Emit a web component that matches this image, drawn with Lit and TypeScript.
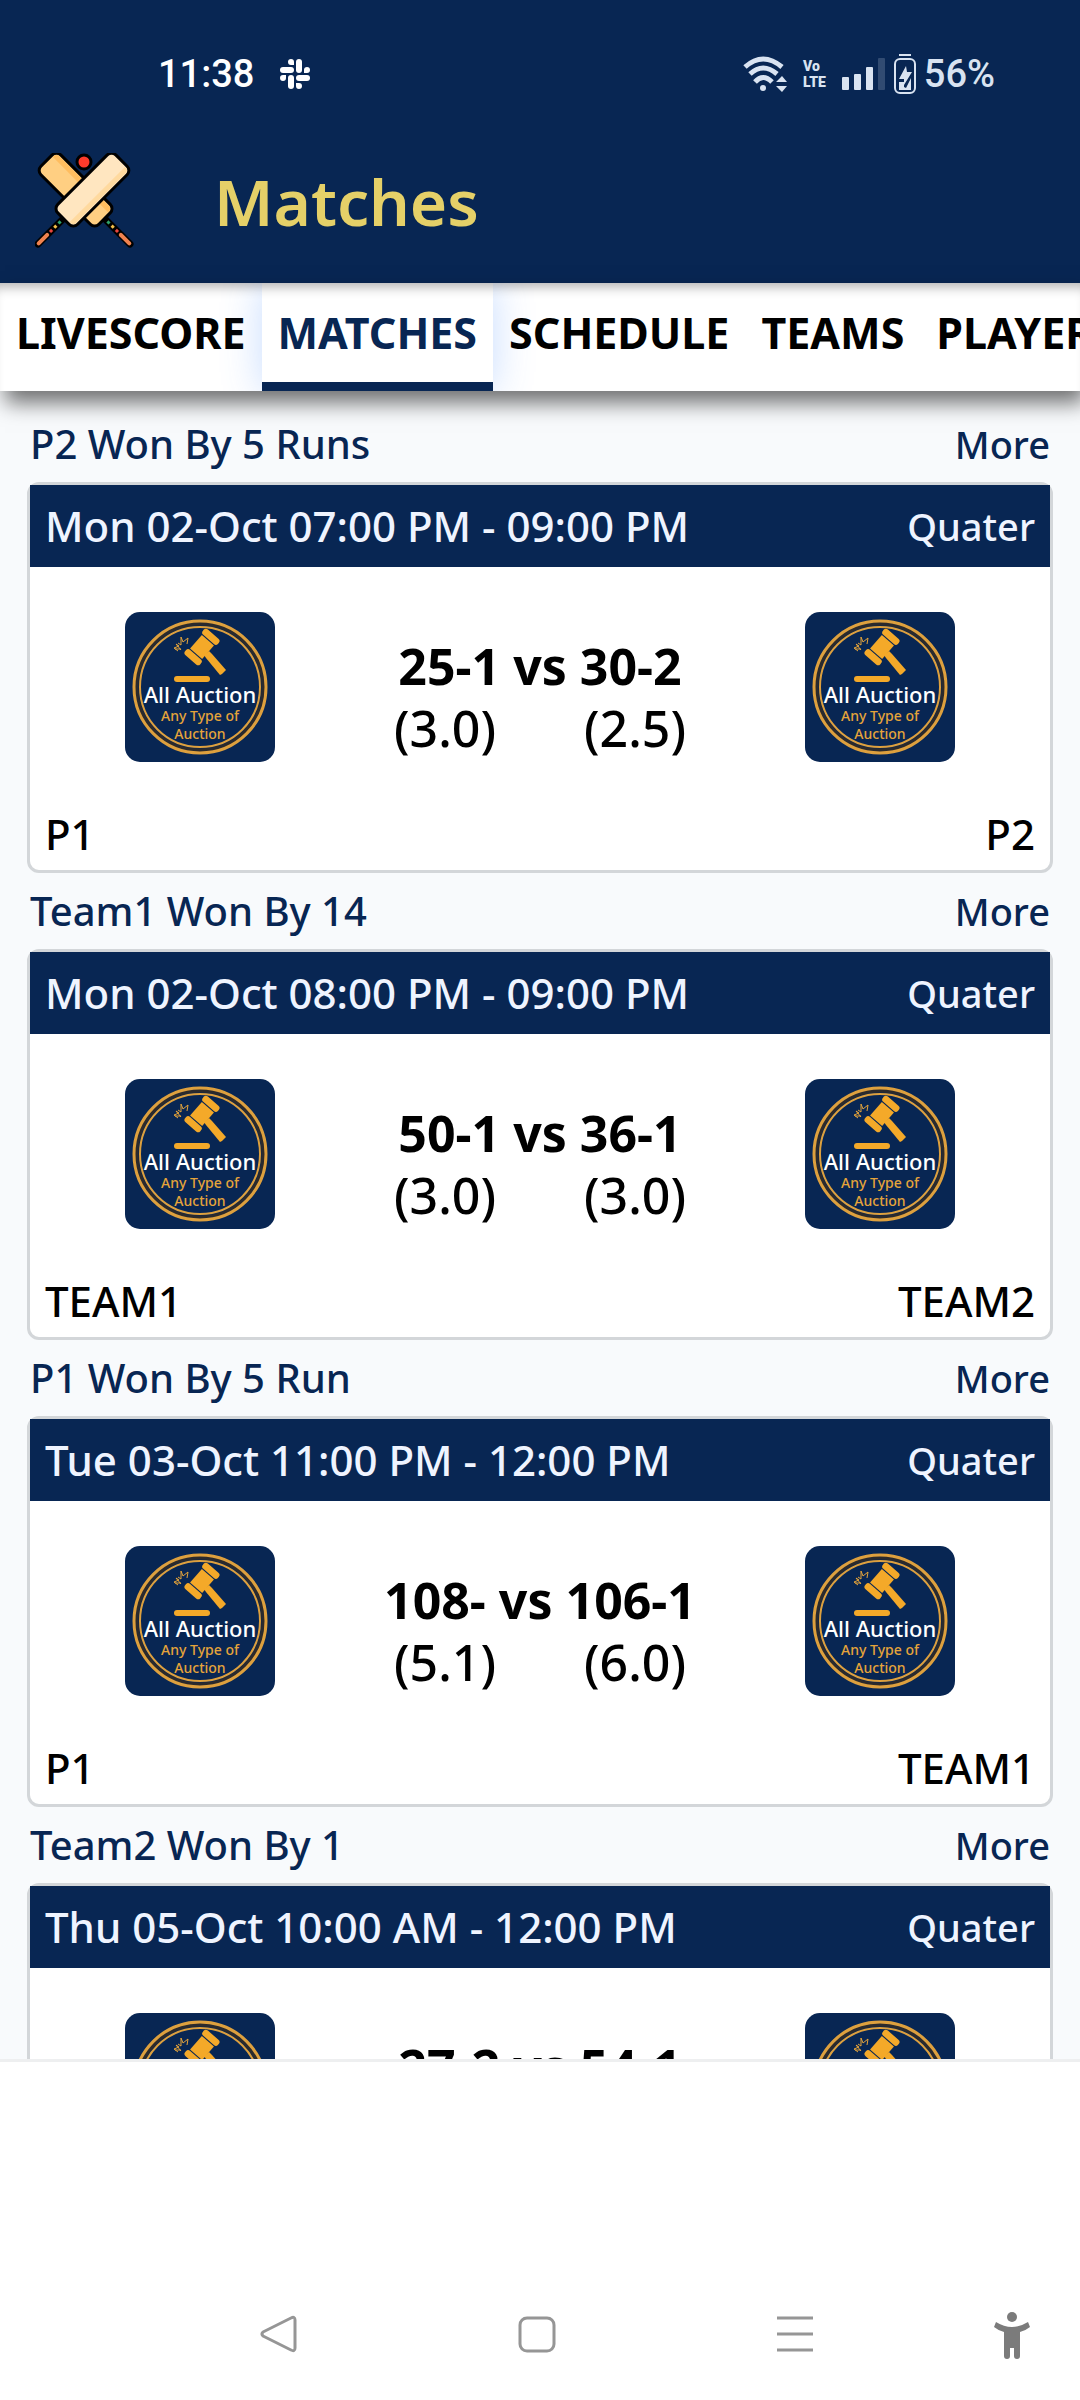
import { LitElement, html, css, svg } from 'lit';
import { customElement, property, state } from 'lit/decorators.js';
import { classMap } from 'lit/directives/class-map.js';

interface Side {
  name: string;
  score: string;
  overs: string;
}

interface Match {
  result: string;
  time: string;
  stage: string;
  home: Side;
  away: Side;
}

const MATCHES: Match[] = [
  {
    result: 'P2 Won By 5 Runs',
    time: 'Mon 02-Oct 07:00 PM - 09:00 PM',
    stage: 'Quater',
    home: { name: 'P1', score: '25-1', overs: '3.0' },
    away: { name: 'P2', score: '30-2', overs: '2.5' },
  },
  {
    result: 'Team1 Won By 14',
    time: 'Mon 02-Oct 08:00 PM - 09:00 PM',
    stage: 'Quater',
    home: { name: 'TEAM1', score: '50-1', overs: '3.0' },
    away: { name: 'TEAM2', score: '36-1', overs: '3.0' },
  },
  {
    result: 'P1 Won By 5 Run',
    time: 'Tue 03-Oct 11:00 PM - 12:00 PM',
    stage: 'Quater',
    home: { name: 'P1', score: '108-', overs: '5.1' },
    away: { name: 'TEAM1', score: '106-1', overs: '6.0' },
  },
  {
    result: 'Team2 Won By 1',
    time: 'Thu 05-Oct 10:00 AM - 12:00 PM',
    stage: 'Quater',
    home: { name: 'TEAM1', score: '27-2', overs: '4.0' },
    away: { name: 'TEAM2', score: '54-1', overs: '4.0' },
  },
];

const TABS = ['LIVESCORE', 'MATCHES', 'SCHEDULE', 'TEAMS', 'PLAYERS'];

@customElement('status-bar')
export class StatusBar extends LitElement {
  static override styles = css`
    :host {
      display: flex;
      align-items: center;
      justify-content: space-between;
      height: 148px;
      padding: 0 85px 0 158px;
      font: 500 38px/48px Roboto, sans-serif;
      color: #fff;
    }

    .left,
    .right {
      display: flex;
      align-items: center;
    }

    .left {
      gap: 26px;
    }

    .right {
      color: #d9e3f1;
      gap: 8px;
    }

    .signals {
      display: flex;
      align-items: center;
      gap: 16px;
    }

    .volte {
      display: grid;
      font: 900 14px/16px Roboto, sans-serif;
    }

    svg {
      display: block;
    }
  `;

  override render() {
    return html`
      <div class="left">
        <span>11:38</span>
        <svg width="30" height="30" viewBox="0 0 30 30" fill="#fff">
          <rect x="16" y="0" width="6" height="14" rx="3" />
          <rect x="0" y="8" width="14" height="6" rx="3" />
          <rect x="8" y="16" width="6" height="14" rx="3" />
          <rect x="16" y="16" width="14" height="6" rx="3" />
          <path d="M14 6h-3a3 3 0 1 1 3-3zM24 14v-3a3 3 0 1 1 3 3zM16 24h3a3 3 0 1 1-3 3zM6 16v3a3 3 0 1 1-3-3z" />
        </svg>
      </div>
      <div class="right">
        <div class="signals">
          <svg width="44" height="36" viewBox="0 0 44 36" fill="none" stroke="currentColor" stroke-width="5">
            <path d="M2 11Q20 -5 39 11M7 18Q20 6 34 18M12 26Q20 17 29 26" />
            <circle cx="20" cy="32" r="3" fill="currentColor" stroke="none" />
            <path d="M33 26h11l-5-6zM33 30h11l-5 6z" fill="currentColor" stroke="none" />
          </svg>
          <div class="volte"><span>Vo</span><span>LTE</span></div>
          <svg width="44" height="32" viewBox="0 0 44 32" fill="currentColor">
            <rect x="0" y="19" width="7" height="13" rx="1" />
            <rect x="12" y="16" width="7" height="16" rx="1" />
            <rect x="24" y="9" width="7" height="23" rx="1" />
            <rect x="36" y="0" width="7" height="32" rx="1" opacity=".2" />
          </svg>
        </div>
        <svg width="22" height="40" viewBox="0 0 22 40" fill="none" stroke="currentColor" stroke-width="2">
          <path d="M5 1h12" />
          <rect x="1" y="5" width="20" height="34" rx="5" />
          <path d="M12 12L5 25h5v6l8-13h-5z" fill="currentColor" stroke="none" />
          <path d="M5 28v8h12V24l-5 10-2-1v-5z" fill="currentColor" stroke="none" />
        </svg>
        <span>56%</span>
      </div>
    `;
  }
}

@customElement('team-logo')
export class TeamLogo extends LitElement {
  static override styles = css`
    :host {
      display: block;
      width: 150px;
      height: 150px;
      border-radius: 15px;
      overflow: hidden;
      background: #082653;
    }

    svg {
      display: block;
    }

    text {
      font-family: 'Noto Sans', sans-serif;
      text-anchor: middle;
    }

    .name {
      font-size: 22px;
      font-weight: 500;
      fill: #fff;
    }

    .tagline {
      font-size: 14px;
      font-weight: 500;
      fill: #e5a43a;
    }
  `;

  override render() {
    return html`
      <svg width="150" height="150" viewBox="0 0 150 150">
        <circle cx="75" cy="75" r="64" fill="none" stroke="#2b2a2c" stroke-width="5" />
        <circle cx="75" cy="75" r="66" fill="none" stroke="#dda03e" stroke-width="3" />
        <circle cx="75" cy="75" r="60" fill="none" stroke="#dda03e" stroke-width="2" />
        <g fill="#f4a929">
          <g transform="translate(77 35) rotate(-49)">
            <rect x="-9" y="-8" width="18" height="16" />
            <rect x="-17" y="-10" width="7" height="20" rx="3" />
            <rect x="10" y="-10" width="7" height="20" rx="3" />
          </g>
          <path d="M79 43l5-4 3 3 14 16-4 4-2 1-14-17z" />
          <rect x="49" y="64" width="36" height="6" rx="3" />
        </g>
        <path
          d="M62 32l1-6-5 4-2-5v8l-3-2M56 38l-5-6 3 2-5 2 4 3M50 37h6"
          fill="none"
          stroke="#e5a43a"
        />
        <text class="name" x="75" y="91">All Auction</text>
        <text class="tagline" x="75" y="109">Any Type of</text>
        <text class="tagline" x="75" y="127">Auction</text>
      </svg>
    `;
  }
}

@customElement('match-card')
export class MatchCard extends LitElement {
  static override styles = css`
    :host {
      display: block;
      font-size: 42px;
      line-height: 48px;
    }

    .summary {
      display: flex;
      justify-content: space-between;
      padding: 14px 3px;
      font-size: 40px;
      color: #082653;
    }

    .more,
    .stage {
      font-size: 38px;
    }

    .more {
      color: inherit;
      text-decoration: none;
    }

    .card {
      border: 3px solid #d3d6d9;
      border-radius: 12px;
      background: #fff;
    }

    .heading,
    .teams {
      display: flex;
      justify-content: space-between;
      padding: 17px 15px;
    }

    .heading {
      background: #082653;
      color: #eff4ff;
    }

    .play {
      display: grid;
      grid-template-columns: repeat(3, 1fr);
      justify-items: center;
      height: 195px;
      padding-top: 45px;
      box-sizing: border-box;
    }

    .score {
      padding-top: 23px;
      font-size: 50px;
      line-height: 62px;
      text-align: center;
      white-space: nowrap;
    }

    .runs {
      font-weight: 700;
    }

    .overs {
      display: flex;
      justify-content: center;
      gap: 88px;
    }

    .teams {
      padding: 48px 15px 12px;
    }
  `;

  @property({ attribute: false }) match!: Match;

  override render() {
    const { result, time, stage, home, away } = this.match;
    return html`
      <div class="summary">
        <span>${result}</span>
        <a class="more" href="#">More</a>
      </div>
      <article class="card">
        <header class="heading">
          <span>${time}</span>
          <span class="stage">${stage}</span>
        </header>
        <div class="play">
          <team-logo></team-logo>
          <div class="score">
            <div class="runs">${home.score} vs ${away.score}</div>
            <div class="overs">
              <span>(${home.overs})</span>
              <span>(${away.overs})</span>
            </div>
          </div>
          <team-logo></team-logo>
        </div>
        <footer class="teams">
          <span>${home.name}</span>
          <span>${away.name}</span>
        </footer>
      </article>
    `;
  }
}

@customElement('app-root')
export class AppRoot extends LitElement {
  static override styles = css`
    :host {
      display: flex;
      flex-direction: column;
      height: 100vh;
      background: #fff;
      color: #000;
      font-family: 'Noto Sans', sans-serif;
      font-weight: 500;
    }

    .top {
      background: #082653;
    }

    .title-bar {
      display: flex;
      align-items: center;
      gap: 80px;
      padding: 0 35px 27px;
    }

    h1 {
      margin: 0;
      font-size: 64px;
      line-height: 108px;
      font-weight: 600;
      color: #e5d068;
    }

    .tabs {
      display: flex;
      flex-shrink: 0;
      overflow: hidden;
      height: 108px;
      background: #fff;
      box-shadow: inset 0 12px 12px -8px rgba(0, 0, 0, 0.3);
    }

    .tab-shadow {
      position: relative;
      z-index: 1;
      box-shadow: 5px 12px 20px rgba(0, 0, 0, 0.55);
    }

    .tab {
      flex: none;
      padding: 0 16px;
      border: 0;
      border-bottom: 9px solid transparent;
      background: none;
      font: 700 43px/48px 'Noto Sans', sans-serif;
      color: #000;
    }

    .tab.active {
      border-bottom-color: #082653;
      color: #082653;
      box-shadow: 0 0 40px rgba(70, 140, 255, 0.3);
    }

    .list {
      flex: 1;
      overflow: hidden;
      min-height: 0;
      padding: 15px 27px 0;
      background: #f8fafc;
      border-bottom: 3px solid #eeeff0;
    }

    .bottom {
      display: grid;
      grid-template-columns: 1fr 1fr 1fr;
      align-items: end;
      position: relative;
      flex: none;
      height: 338px;
      padding: 0 156px 38px 150px;
      box-sizing: border-box;
    }

    .nav {
      display: flex;
      justify-content: center;
      padding: 0;
      border: 0;
      background: none;
    }

    .access {
      position: absolute;
      right: 48px;
      bottom: 38px;
    }

    svg {
      display: block;
    }
  `;

  @state() private active = 'MATCHES';

  private renderBats() {
    const bat = (blade: string, edge: string) => svg`
      <path d="M0 20V58" stroke="#000" stroke-width="7" stroke-linecap="round" />
      <path d="M0 45V57" stroke="#f0824f" stroke-width="4" stroke-linecap="round" />
      <path d="M0 38V41" stroke="#e8453c" stroke-width="3" />
      <path d="M0 32V35" stroke="#f5c04a" stroke-width="3" />
      <path d="M0 26V29" stroke="#2fa36b" stroke-width="3" />
      <rect x="-14" y="-60" width="28" height="82" rx="6" fill=${blade} stroke="#000" stroke-width="3" />
      <path d="M7 -58V20H9A4 4 0 0 0 12 17V-54A4 4 0 0 0 9 -58Z" fill=${edge} />
    `;
    return html`
      <svg width="99" height="99" viewBox="0 0 99 99">
        <g transform="translate(54 50) rotate(-45)">${bat('#ffcf82', '#ffbd5f')}</g>
        <g transform="translate(44 50) rotate(45)">${bat('#ffe6c0', '#ffda9f')}</g>
        <circle cx="49" cy="9" r="7" fill="#ff3b2b" stroke="#000" stroke-width="3" />
      </svg>
    `;
  }

  private renderTab(name: string) {
    const active = name === this.active;
    return html`
      <button
        class=${classMap({ tab: true, active })}
        role="tab"
        aria-selected=${active}
        @click=${() => (this.active = name)}
      >${name}</button>
    `;
  }

  override render() {
    return html`
      <div class="top">
        <status-bar></status-bar>
        <header class="title-bar">
          ${this.renderBats()}
          <h1>Matches</h1>
        </header>
      </div>
      <div class="tab-shadow">
        <nav class="tabs" role="tablist">${TABS.map((name) => this.renderTab(name))}</nav>
      </div>
      <main class="list">
        ${MATCHES.map((match) => html`<match-card .match=${match}></match-card>`)}
      </main>
      <nav class="bottom">
        <button class="nav" aria-label="Back">
          <svg width="40" height="56" viewBox="0 0 40 56" fill="none" stroke="#969696" stroke-width="3" stroke-linejoin="round">
            <path d="M4 26L32 12Q36 10 36 14V42Q36 46 32 44L4 30Q2 28 4 26Z" />
          </svg>
        </button>
        <button class="nav" aria-label="Home">
          <svg width="40" height="56" viewBox="0 0 40 56" fill="none" stroke="#969696" stroke-width="3">
            <rect x="3" y="12" width="34" height="33" rx="7" />
          </svg>
        </button>
        <button class="nav" aria-label="Recent apps">
          <svg width="40" height="56" viewBox="0 0 40 56" stroke="#969696" stroke-width="3">
            <path d="M2 12h36M2 28h36M2 44h36" />
          </svg>
        </button>
        <button class="nav access" aria-label="Accessibility">
          <svg width="40" height="56" viewBox="0 0 40 56" fill="#7b7b7b">
            <circle cx="20" cy="11" r="5" />
            <path d="M4 16Q20 26 36 16L38 21Q33 25 28 26V50Q28 53 25 53Q22 53 22 50V42H18V50Q18 53 15 53Q12 53 12 50V26Q7 25 2 21Z" />
          </svg>
        </button>
      </nav>
    `;
  }
}
